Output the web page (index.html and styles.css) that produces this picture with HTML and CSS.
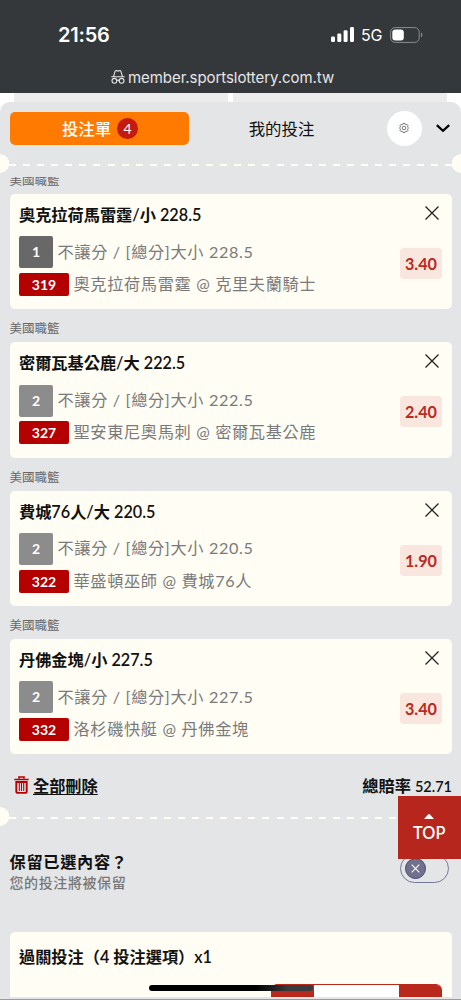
FILE: index.html
```
<!DOCTYPE html>
<html lang="zh-Hant">

<head>
    <meta charset="UTF-8">
    <title>投注單</title>
    <meta name="viewport" content="width=device-width, initial-scale=1.0">
    <link rel="stylesheet" href="styles.css">
</head>

<body>
    <header class="phone-bar">
        <div class="status">
            <span class="time">21:56</span>
            <div class="status-right">
                <svg class="signal" width="24" height="15" viewBox="0 0 24 15" fill="#fff">
                    <rect x="0" y="9.5" width="4" height="5.5" rx="1.2" />
                    <rect x="6.3" y="6.6" width="4" height="8.4" rx="1.2" />
                    <rect x="12.6" y="3.3" width="4" height="11.7" rx="1.2" />
                    <rect x="19" y="0" width="4" height="15" rx="1.2" />
                </svg>
                <span class="network">5G</span>
                <svg class="battery" width="33" height="16" viewBox="0 0 33 16">
                    <rect x=".6" y=".6" width="28.6" height="14.8" rx="4.6" fill="none" stroke="#8b8d8f" stroke-width="1" />
                    <rect x="2.3" y="2.4" width="11.5" height="11.2" rx="3" fill="#fff" />
                    <path d="M31 5.6c1.9 1 1.9 3.8 0 4.8z" fill="#8b8d8f" />
                </svg>
            </div>
        </div>
        <div class="address">
            <svg width="14" height="14" viewBox="0 0 14 14" fill="none" stroke="#e6e6e7" stroke-width="1.1">
                <path d="M.3 6.8h13.4M2.5 6.6 4 1.6C4.2.7 4.900.5 5.500.7 6.500 1 7.500 1 8.500.7 9.100.5 9.800.7 10 1.600L11.500 6.600M5.800 10.600q1.200-.9 2.400 0" />
                <circle cx="3.4" cy="10.8" r="2.4" />
                <circle cx="10.6" cy="10.8" r="2.4" />
            </svg>
            <span>member.sportslottery.com.tw</span>
        </div>
    </header>

    <div class="page-behind">
        <span></span>
        <span></span>
    </div>

    <main class="slip">
        <nav class="tabs">
            <button class="tab active">投注單 <span class="count">4</span></button>
            <button class="tab">我的投注</button>
            <button class="settings">
                <svg width="10" height="10" viewBox="0 0 20 20" fill="none" stroke="#555" stroke-width="1.5">
                    <path d="M8 1h4l.7 2.300 1.300.6L16.200 2.800 18 5.200l-1 2.200.5 1.300L19.300 10l-1.800 1.300-.5 1.300 1 2.200-1.800 2.400-2.200-1.100-1.300.6L12 19H8l-.7-2.300-1.300-.6-2.200 1.100L2 14.800l1-2.200-.5-1.300L.7 10l1.800-1.300L3 7.400 2 5.200l1.800-2.400L6 3.900l1.300-.6z" />
                    <circle cx="10" cy="10" r="3.500" />
                </svg>
            </button>
            <svg class="chevron" width="14" height="9" viewBox="0 0 14 9" fill="none" stroke="#000" stroke-width="2.300">
                <path d="m.8 1.200 6.200 5.600 6.200-5.600" />
            </svg>
        </nav>

        <div class="divider"></div>

        <div class="bets">
            <section class="bet">
                <p class="league">美國職籃</p>
                <article class="card">
                    <h2>奧克拉荷馬雷霆/小 228.5</h2>
                    <svg class="close" viewBox="0 0 14 14"><path d="m.5.5 13 13m0-13-13 13" /></svg>
                    <div class="details">
                        <p><span class="min dark">1</span><span class="text">不讓分 / [總分]大小 228.5</span></p>
                        <p><span class="code">319</span><span class="text">奧克拉荷馬雷霆 @ 克里夫蘭騎士</span></p>
                    </div>
                    <span class="odds">3.40</span>
                </article>
            </section>
            <section class="bet">
                <p class="league">美國職籃</p>
                <article class="card">
                    <h2>密爾瓦基公鹿/大 222.5</h2>
                    <svg class="close" viewBox="0 0 14 14"><path d="m.5.5 13 13m0-13-13 13" /></svg>
                    <div class="details">
                        <p><span class="min">2</span><span class="text">不讓分 / [總分]大小 222.5</span></p>
                        <p><span class="code">327</span><span class="text">聖安東尼奧馬刺 @ 密爾瓦基公鹿</span></p>
                    </div>
                    <span class="odds">2.40</span>
                </article>
            </section>
            <section class="bet">
                <p class="league">美國職籃</p>
                <article class="card">
                    <h2>費城76人/大 220.5</h2>
                    <svg class="close" viewBox="0 0 14 14"><path d="m.5.5 13 13m0-13-13 13" /></svg>
                    <div class="details">
                        <p><span class="min">2</span><span class="text">不讓分 / [總分]大小 220.5</span></p>
                        <p><span class="code">322</span><span class="text">華盛頓巫師 @ 費城76人</span></p>
                    </div>
                    <span class="odds">1.90</span>
                </article>
            </section>
            <section class="bet">
                <p class="league">美國職籃</p>
                <article class="card">
                    <h2>丹佛金塊/小 227.5</h2>
                    <svg class="close" viewBox="0 0 14 14"><path d="m.5.5 13 13m0-13-13 13" /></svg>
                    <div class="details">
                        <p><span class="min">2</span><span class="text">不讓分 / [總分]大小 227.5</span></p>
                        <p><span class="code">332</span><span class="text">洛杉磯快艇 @ 丹佛金塊</span></p>
                    </div>
                    <span class="odds">3.40</span>
                </article>
            </section>
        </div>

        <div class="totals">
            <a class="delete-all">
                <svg width="15" height="18" viewBox="0 0 15 18" fill="none" stroke="#b90000">
                    <path d="M5 2.500V1h5v1.500M.3 3.500h14.400" stroke-width="1.700" />
                    <path d="M2.300 6v9.200q0 1.700 1.700 1.700h7q1.700 0 1.700-1.700V6z" stroke-width="1.900" />
                    <path d="M5.300 7v8M7.500 7v8M9.700 7v8" stroke-width="1.100" />
                </svg>
                <span>全部刪除</span>
            </a>
            <span class="total-odds">總賠率 <b>52.71</b></span>
        </div>

        <div class="divider"></div>

        <div class="keep">
            <div>
                <h3>保留已選內容？</h3>
                <p>您的投注將被保留</p>
            </div>
            <div class="switch">
                <span class="knob">
                    <svg width="9" height="9" viewBox="0 0 9 9" stroke="#fff" stroke-width="1.100"><path d="m.7.7 7.600 7.600m0-7.600L.7 8.300" /></svg>
                </span>
            </div>
        </div>

        <article class="parlay">
            <h2>過關投注（4 投注選項）x1</h2>
            <div class="stake">
                <span></span>
                <span class="amount"></span>
                <span></span>
            </div>
        </article>
    </main>

    <a class="top-button">
        <svg width="10" height="5" viewBox="0 0 10 5" fill="#fff"><path d="M0 5 4 .5q1-1 2 0L10 5z" /></svg>
        <span>TOP</span>
    </a>
    <div class="home-indicator"></div>
    <div class="page-edge"></div>
</body>

</html>
```

FILE: styles.css
```
* {
    box-sizing: border-box;
}

body {
    margin: 0;
    height: 1000px;
    overflow: hidden;
    position: relative;
    background-color: #fff;
    color: #111;
    font-family: Lato, "Noto Sans CJK TC", sans-serif;
}

h2,
h3,
p {
    margin: 0;
}

button {
    border: none;
    padding: 0;
    background: none;
    font-family: inherit;
    color: inherit;
}

svg {
    display: block;
    flex: none;
}

/* phone status and address bar */
.phone-bar {
    height: 93px;
    background-color: #35383b;
    color: #fff;
    font-family: Inter, sans-serif;
}

.status {
    display: flex;
    justify-content: space-between;
    align-items: center;
    height: 69px;
    padding: 0 38px 0 58px;
}

.time {
    font-size: 20px;
    font-weight: 600;
    letter-spacing: -0.2px;
}

.status-right {
    display: flex;
    align-items: center;
}

.network {
    width: 29px;
    margin-left: 6px;
    font-size: 16px;
    font-weight: 400;
    letter-spacing: -0.2px;
}

.address {
    display: flex;
    align-items: center;
    gap: 3px;
    height: 16px;
    padding-left: 111px;
    color: #e6e6e7;
    font-size: 15px;
    letter-spacing: -0.06px;
    white-space: nowrap;
}

.page-behind {
    display: flex;
    gap: 5px;
    height: 9px;
    padding: 0 14px;
}

.page-behind span {
    flex: 1;
    background-color: #ececec;
}

/* bet slip */
.slip {
    height: 898px;
    overflow: hidden;
    background-color: #e4e5e7;
    border-radius: 10px 10px 0 0;
}

.tabs {
    display: flex;
    align-items: center;
    height: 52px;
    padding: 0 11px 0 9.5px;
}

.tab {
    display: flex;
    align-items: center;
    justify-content: center;
    gap: 6px;
    width: 186px;
    height: 33px;
    font-size: 16.4px;
}

.tab.active {
    width: 179px;
    padding-left: 2px;
    border-radius: 5px;
    background-color: #ff7a00;
    color: #fff;
    font-weight: 500;
}

.count {
    width: 21px;
    height: 21px;
    border-radius: 50%;
    background-color: #c41a10;
    font-size: 14px;
    font-weight: 400;
    line-height: 21px;
}

.settings {
    display: flex;
    align-items: center;
    justify-content: center;
    width: 35px;
    height: 35px;
    margin-left: 12px;
    border-radius: 50%;
    background-color: #fff;
}

.chevron {
    margin-left: 14px;
}

.divider {
    height: 19px;
    background:
        radial-gradient(circle at 0 50%, #fffdf4 9px, transparent 9.5px),
        radial-gradient(circle at 461px 50%, #fffdf4 9px, transparent 9.5px),
        repeating-linear-gradient(90deg, #fffdf4 0 7px, transparent 7px 14.08px) 9px 10px / 443px 2px no-repeat;
}

.bets {
    height: 578px;
    margin-top: 4px;
    padding: 0 9.5px;
    overflow: hidden;
}

.bet:first-child {
    margin-top: -16px;
}

.league {
    height: 33px;
    padding-top: 11px;
    color: #666;
    font-size: 12.5px;
    line-height: 18px;
}

.card {
    position: relative;
    height: 115.33px;
    padding: 10px 9.5px 0;
    border-radius: 5px;
    background-color: #fffdf4;
}

.card h2,
.parlay h2 {
    color: #111;
    font-size: 16.2px;
    font-weight: 600;
    line-height: 22px;
}

.close {
    position: absolute;
    top: 12px;
    right: 12.5px;
    width: 14px;
    height: 14px;
    stroke: #222;
    stroke-width: 1.3;
}

.details {
    margin-top: 10px;
}

.details p {
    display: flex;
    align-items: center;
    height: 32.5px;
    color: #7a7a7a;
    font-size: 16.2px;
    letter-spacing: 0.65px;
    white-space: nowrap;
}

.details p + p {
    height: 32px;
}

.details .text {
    padding-bottom: 3px;
}

.min,
.code {
    flex: none;
    border-radius: 2px;
    color: #fff;
    font-size: 14px;
    font-weight: 700;
    letter-spacing: 0;
    text-align: center;
}

.min {
    width: 34px;
    height: 32px;
    margin-right: 4.5px;
    background-color: #8c8c8c;
    line-height: 32px;
}

.min.dark {
    background-color: #686868;
}

.code {
    width: 50px;
    height: 23px;
    margin-right: 4.5px;
    background-color: #b50000;
    line-height: 23px;
}

.odds {
    position: absolute;
    top: 54px;
    right: 9.5px;
    width: 42px;
    height: 31px;
    border-radius: 4px;
    background-color: #f8e6df;
    color: #bd2a20;
    font-size: 16.2px;
    font-weight: 700;
    line-height: 31px;
    text-align: center;
}

.totals {
    display: flex;
    justify-content: space-between;
    align-items: center;
    height: 52px;
    padding: 7px 9px 0 14px;
    font-size: 16.2px;
    font-weight: 600;
}

.delete-all {
    display: flex;
    align-items: center;
    gap: 4px;
    text-decoration: underline;
    text-decoration-thickness: 1px;
    text-underline-offset: 2px;
}

.total-odds b {
    font-size: 14.5px;
    font-weight: 600;
}

.keep {
    display: flex;
    justify-content: space-between;
    height: 106px;
    padding: 23.5px 12px 0 9.5px;
}

.keep h3 {
    font-size: 16.2px;
    font-weight: 600;
    letter-spacing: 0.7px;
    line-height: 23px;
}

.keep p {
    color: #777;
    font-size: 14px;
    font-weight: 500;
    letter-spacing: 0.6px;
    line-height: 20px;
}

.switch {
    width: 49px;
    height: 29px;
    margin-top: 4px;
    padding: 3px 4px;
    border: 1px solid #77779b;
    border-radius: 15px;
}

.knob {
    display: flex;
    align-items: center;
    justify-content: center;
    width: 21px;
    height: 21px;
    border: 1px solid #454577;
    border-radius: 50%;
    background-color: #71718d;
}

.parlay {
    height: 65px;
    margin: 0 9.5px;
    padding: 14px 9.5px 0;
    border-radius: 5px 5px 0 0;
    background-color: #fffdf4;
}

.stake {
    display: flex;
    width: 171px;
    height: 13px;
    margin: 16px 0 0 auto;
    border-top: 1px solid #b9281c;
    border-radius: 6px 6px 0 0;
    overflow: hidden;
}

.stake span {
    width: 43px;
    background-color: #b9281c;
}

.stake .amount {
    flex: 1;
    background-color: #fff;
}

/* things floating over the slip */
.top-button {
    position: absolute;
    top: 796px;
    right: 0;
    display: flex;
    flex-direction: column;
    align-items: center;
    gap: 3px;
    width: 63.5px;
    height: 63px;
    padding-top: 18px;
    background-color: #b6261c;
    color: #fff;
    font-size: 16.3px;
    font-weight: 600;
    line-height: 22px;
}

.home-indicator {
    position: absolute;
    top: 984.5px;
    left: 148.5px;
    width: 164.5px;
    height: 6.5px;
    border-radius: 4px;
    background: linear-gradient(90deg, #000 65%, #3b3b3d 85%);
}

.page-edge {
    position: absolute;
    top: 997px;
    left: 0;
    width: 100%;
    height: 3px;
    background-color: #e4e5e7;
    border-bottom: 1px solid #999b9d;
}
```
